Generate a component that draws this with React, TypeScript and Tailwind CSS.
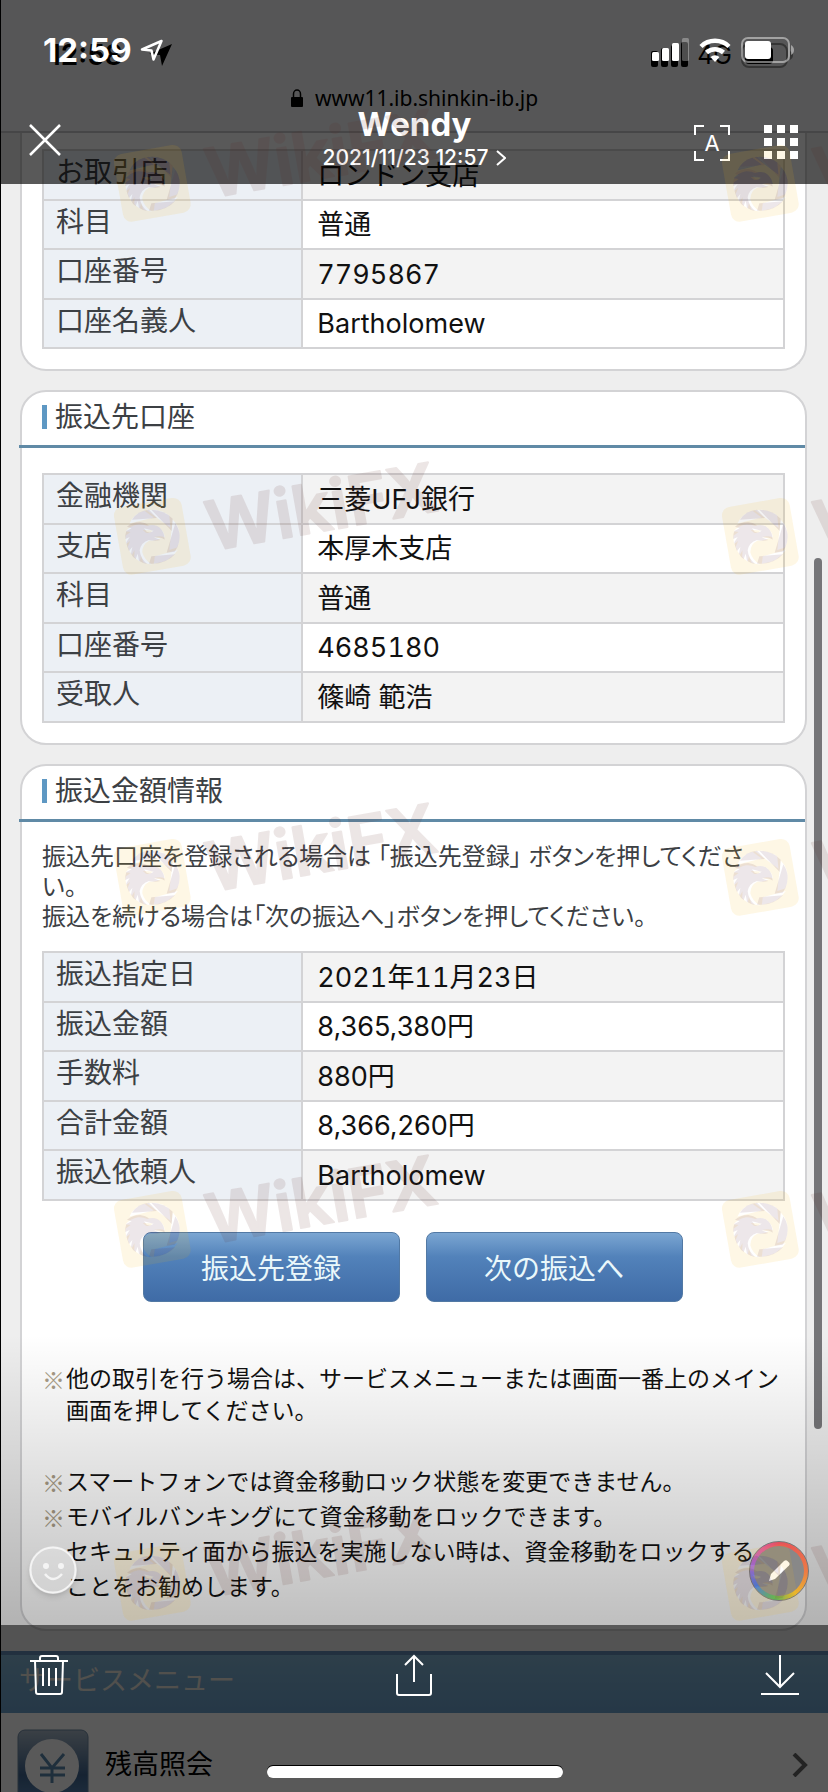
import { ReactNode } from 'react';

interface Row {
  label: string;
  value: string;
}

const source: Row[] = [
  { label: 'お取引店', value: 'ロンドン支店' },
  { label: '科目', value: '普通' },
  { label: '口座番号', value: '7795867' },
  { label: '口座名義人', value: 'Bartholomew' },
];

const destination: Row[] = [
  { label: '金融機関', value: '三菱UFJ銀行' },
  { label: '支店', value: '本厚木支店' },
  { label: '科目', value: '普通' },
  { label: '口座番号', value: '4685180' },
  { label: '受取人', value: '篠崎 範浩' },
];

const amounts: Row[] = [
  { label: '振込指定日', value: '2021年11月23日' },
  { label: '振込金額', value: '8,365,380円' },
  { label: '手数料', value: '880円' },
  { label: '合計金額', value: '8,366,260円' },
  { label: '振込依頼人', value: 'Bartholomew' },
];

const watermarkRows = ['top-[97px]', 'top-[450px]', 'top-[791px]', 'top-[1143px]', 'top-[1496px]'];

function DetailTable({ rows }: { rows: Row[] }) {
  return (
    <table className="w-full table-fixed border-separate border-spacing-0 border-l-2 border-t-2 border-[#d3d3d5]">
      <tbody>
        {rows.map((row) => (
          <tr key={row.label} className="h-[49px] odd:h-[50px] odd:bg-[#f3f3f3]">
            <th
              scope="row"
              className="w-[35%] border-b-2 border-r-2 border-[#d3d3d5] bg-[#ecf0f5] pl-3 text-left align-top text-[28px] leading-[42px] font-normal text-[#3c4044]">
              {row.label}
            </th>
            <td
              className={`border-b-2 border-r-2 border-[#d3d3d5] pt-px pl-[14px] align-middle text-[27px] leading-[42px] text-[#111] ${row.value.endsWith('円') ? '' : 'tabular-nums'}`}>
              {row.value}
            </td>
          </tr>
        ))}
      </tbody>
    </table>
  );
}

function Card({ title, children }: { title: string; children: ReactNode }) {
  return (
    <section className="rounded-[26px] border-2 border-[#d3d3d5] bg-white">
      <h2 className="-ml-[3px] flex h-[56px] items-center gap-2 border-b-[3px] border-[#608aa6] pb-1 pl-[23px] text-[28px] leading-[40px] text-[#3c4044]">
        <span className="h-6 w-[5px] bg-[#5e98c3]" />
        {title}
      </h2>
      <div className="px-5">{children}</div>
    </section>
  );
}

function BlueButton({ children }: { children: ReactNode }) {
  return (
    <button
      type="button"
      className="h-[70px] w-[257px] rounded-lg border border-[#5279a4] bg-linear-to-b from-[#7ba6d2] via-[#5282ba] via-35% to-[#3f6ba6] pt-1 text-[28px] leading-[40px] text-[#eaf8fb]">
      {children}
    </button>
  );
}

function Note({ mark, children }: { mark?: boolean; children: ReactNode }) {
  return (
    <li className="flex">
      <span className="w-6 shrink-0 font-['Noto_Sans_CJK_JP',sans-serif] text-[#a89c86]">{mark && '※'}</span>
      <span>{children}</span>
    </li>
  );
}

function BrowserBar() {
  return (
    <div className="flex h-[133px] flex-col border-b-2 border-[#c9c9cc] bg-[#f7f7f9] text-black">
      <div className="flex h-[80px] items-end justify-between pb-2 pl-[48px] pr-[34px]">
        <div className="flex items-center gap-6 text-[28px] leading-[34px] font-semibold">
          12:58
          <svg className="h-[24px] w-[26px]" viewBox="0 0 26 24" fill="currentColor">
            <path d="M25 1 2 11 13 12 15 23Z" />
          </svg>
        </div>
        <div className="flex items-center gap-2 text-[25px] leading-[34px]">
          <svg className="h-[26px] w-[38px]" viewBox="0 0 38 26" fill="currentColor">
            <rect x="0" y="9" width="7" height="16" rx="2" />
            <rect x="10" y="6" width="7" height="19" rx="2" />
            <rect x="20" y="3" width="7" height="22" rx="2" />
            <rect x="30" y="0" width="7" height="25" rx="2" />
          </svg>
          4G
          <svg className="h-[27px] w-[54px]" viewBox="0 0 54 27">
            <rect x="2" y="2" width="45" height="23" rx="7" fill="none" stroke="#999" strokeWidth="2" />
            <rect x="5" y="5" width="28" height="17" rx="4" />
            <path d="M50 9c4 2 4 7 0 9Z" fill="#999" />
          </svg>
        </div>
      </div>
      <div className="flex items-center justify-center gap-3 font-['Noto_Sans'] text-[21px] leading-[36px]">
        <svg className="h-[18px] w-3" viewBox="0 0 12 18">
          <rect x="0" y="8" width="12" height="10" rx="1" />
          <path d="M2.5 8V5a3.5 4 0 0 1 7 0v3" fill="none" stroke="#000" strokeWidth="1.5" />
        </svg>
        www11.ib.shinkin-ib.jp
      </div>
    </div>
  );
}

function ServiceMenu() {
  return (
    <nav className="mt-5">
      <h2 className="flex h-[62px] items-center border-t-4 border-[#628ab4] bg-linear-to-b from-[#82b4d3] to-[#6ca0cb] pb-[6px] pl-[18px] text-[27px] leading-[40px] text-[#e8e4dc]">
        サービスメニュー
      </h2>
      <a href="#balance" className="flex h-20 items-center bg-white pt-6 pl-4 pr-5 text-[27px] leading-[40px] text-black">
        <svg className="h-[80px] w-[72px] translate-y-1" viewBox="0 0 72 80">
          <defs>
            <linearGradient id="yen" x1="0" y1="0" x2="0" y2="1">
              <stop offset="0" stopColor="#a9b9c8" />
              <stop offset=".5" stopColor="#3f6590" />
              <stop offset="1" stopColor="#6f9dd0" />
            </linearGradient>
          </defs>
          <rect x="1" y="1" width="70" height="90" rx="7" fill="url(#yen)" stroke="#6f8aa5" />
          <circle cx="35" cy="37" r="27" fill="#fff" />
          <path d="M24 25 35 39 47 25M35 39V54M23 39H48M23 46H48" fill="none" stroke="#5b88ac" strokeWidth="3" />
        </svg>
        <span className="grow pl-4">残高照会</span>
        <svg className="h-6 w-4" viewBox="0 0 16 24" fill="none" stroke="#666" strokeWidth="4">
          <path d="m2 1 11 11L2 23" />
        </svg>
      </a>
    </nav>
  );
}

function ViewerHeader() {
  return (
    <header className="absolute inset-x-0 top-0 h-[184px] bg-black/65 text-white">
      <div className="flex h-[98px] items-center justify-between pt-[2px] pl-[42px] pr-[33px]">
        <div className="flex items-center gap-2 text-[33px] leading-[40px] font-bold">
          12:59
          <svg className="h-6 w-6" viewBox="0 0 24 24" fill="none" stroke="currentColor" strokeWidth="2.5">
            <path d="M21.500 3 2 11.500 11.500 12.500 13.500 21.500Z" strokeLinejoin="round" />
          </svg>
        </div>
        <div className="flex items-center gap-[10px]">
          <svg className="h-[26px] w-[37px]" viewBox="0 0 37 26" fill="currentColor">
            <rect x="0" y="15" width="7" height="9" rx="1.500" />
            <rect x="10" y="11" width="7" height="13" rx="1.500" />
            <rect x="20" y="6" width="7" height="18" rx="1.500" />
            <rect x="30" y="1" width="7" height="23" rx="1.500" opacity=".3" />
          </svg>
          <svg className="h-6 w-8" viewBox="0 0 32 24" fill="none" stroke="currentColor" strokeWidth="4.500">
            <path d="M2 8.500a20 20 0 0 1 28 0M7.500 14.500a12.500 12.500 0 0 1 17 0" />
            <path d="M16 24l-4.500-5a7 7 0 0 1 9 0Z" fill="currentColor" stroke="none" />
          </svg>
          <svg className="h-[26px] w-[54px]" viewBox="0 0 54 26">
            <rect x="1" y="1" width="47" height="24" rx="6" fill="none" stroke="#fff" strokeWidth="2" opacity=".45" />
            <rect x="4" y="4" width="26" height="18" rx="3" fill="#fff" />
            <path d="M50 8c4 2 4 8 0 10Z" fill="#fff" opacity=".45" />
          </svg>
        </div>
      </div>
      <div className="grid h-[86px] grid-cols-[1fr_auto_1fr] items-start px-7">
        <button type="button" aria-label="Close" className="mt-[26px] w-8">
          <svg className="h-8 w-8" viewBox="0 0 32 32" stroke="currentColor" strokeWidth="2.500">
            <path d="M1 1 31 31M31 1 1 31" />
          </svg>
        </button>
        <div className="mt-[6px] flex flex-col items-center">
          <h1 className="text-[33px] leading-[40px] font-bold">Wendy</h1>
          <button type="button" className="flex items-center gap-2 text-[21px] leading-[27px] font-medium">
            2021/11/23 12:57
            <svg className="h-4 w-[10px]" viewBox="0 0 10 16" fill="none" stroke="currentColor" strokeWidth="2">
              <path d="m1 1 8 7-8 7" />
            </svg>
          </button>
        </div>
        <div className="mt-[27px] flex justify-end gap-[34px]">
          <button type="button" aria-label="Scan text" className="relative h-9 w-9 text-[22px] leading-[36px]">
            <svg className="absolute inset-0 h-9 w-9" viewBox="0 0 36 36" fill="none" stroke="currentColor" strokeWidth="2">
              <path d="M1 10V1H10M26 1H35V10M35 26V35H26M10 35H1V26" />
            </svg>
            A
          </button>
          <button type="button" aria-label="Album" className="mr-[2px] grid h-[34px] w-[34px] grid-cols-3 gap-[5px]">
            {Array.from({ length: 9 }, (_, i) => (
              <span key={i} className="h-2 w-2 bg-white" />
            ))}
          </button>
        </div>
      </div>
    </header>
  );
}

function ViewerFooter() {
  return (
    <footer className="absolute inset-x-0 bottom-0 h-[168px] bg-black/65 text-white">
      <div className="flex items-center justify-between px-[29px] pt-[29px]">
        <button type="button" aria-label="Delete">
          <svg className="h-[42px] w-[38px]" viewBox="0 0 38 42" fill="none" stroke="currentColor" strokeWidth="2">
            <path d="M0 7H38M10 7V4a2 2 0 0 1 2-2H26a2 2 0 0 1 2 2V7M5 7 6 38a2 2 0 0 0 2 2H30a2 2 0 0 0 2-2L33 7M13 14V32M19 14V32M26 14V32" />
          </svg>
        </button>
        <button type="button" aria-label="Share">
          <svg className="h-[42px] w-[38px]" viewBox="0 0 38 42" fill="none" stroke="currentColor" strokeWidth="2">
            <path d="M1 20V39a2 2 0 0 0 2 2H33a2 2 0 0 0 2-2V20M18 28V3M9 11 18 2 27 11" />
          </svg>
        </button>
        <button type="button" aria-label="Download">
          <svg className="h-[42px] w-[38px]" viewBox="0 0 38 42" fill="none" stroke="currentColor" strokeWidth="2">
            <path d="M19 1V33M5 19 19 33 33 19M0 40H38" />
          </svg>
        </button>
      </div>
      <div className="absolute bottom-4 left-1/2 h-3 w-[296px] -translate-x-1/2 rounded-full bg-black">
        <div className="h-3 translate-y-px rounded-full bg-white" />
      </div>
    </footer>
  );
}

// Eagle head inside a camera aperture, cut out of the yellow tile
function EagleShape({ fill }: { fill: string }) {
  return (
    <g transform="translate(-203 -337)" fill={fill} fillRule="evenodd">
      <path d="M299 546Q318 518 350 516L374 541Z" />
      <path d="M357 516Q396 517 421 543L418 580Z" />
      <path d="M429 557Q447 584 440 614Q437 630 427 642L403 645Z" />
      <path d="M428 650Q398 682 350 678L357 656Z" />
      <path d="M284 567Q300 553 324 553Q340 555 350 563Q372 558 386 574Q396 586 397 606Q386 598 364 599L384 607Q368 612 350 607Q326 614 322 638Q324 662 344 679Q330 676 320 669L316 648L310 664Q300 657 296 648L300 628L290 640Q283 626 282 614L292 598L279 604Q278 590 282 580L298 572ZM335 572L364 579Q354 588 343 582Z" />
    </g>
  );
}

function Watermark() {
  return (
    <svg className="h-[150px] w-[360px] shrink-0 overflow-visible" viewBox="0 0 1080 450">
      <mask id="tile">
        <rect x="0" y="100" width="320" height="320" fill="#fff" />
        <EagleShape fill="#000" />
      </mask>
      <rect x="54" y="156" width="206" height="206" rx="26" transform="rotate(-10 157 259)" fill="rgba(245,185,20,.11)" mask="url(#tile)" />
      <EagleShape fill="rgba(90,35,60,.11)" />
      <g opacity=".11" fill="#5a231e" stroke="#5a231e" strokeWidth="6" strokeLinejoin="round">
        <text x="332" y="303" transform="rotate(-10 332 303)" fontFamily="Inter" fontWeight="600" fontSize="204">
          WikiFX
        </text>
      </g>
    </svg>
  );
}

export default function App() {
  return (
    <div className="relative min-h-screen overflow-hidden border-l border-black bg-[#eee] font-['Inter','Noto_Sans_CJK_JP',sans-serif]">
      <BrowserBar />
      <main className="flex flex-col gap-[19px] pl-[19px] pr-[21px]">
        <section className="rounded-b-[26px] border-x-2 border-b-2 border-[#d3d3d5] bg-white px-5 pt-4 pb-5">
          <DetailTable rows={source} />
        </section>
        <Card title="振込先口座">
          <div className="pt-[25px] pb-5">
            <DetailTable rows={destination} />
          </div>
        </Card>
        <Card title="振込金額情報">
          <p className="pt-5 pr-5 pb-[19px] text-[24px] leading-[30px] text-[#3c4044] [font-feature-settings:'palt']">
            振込先口座を登録される場合は 「振込先登録」 ボタンを押してください。
            <br />
            振込を続ける場合は「次の振込へ」ボタンを押してください。
          </p>
          <DetailTable rows={amounts} />
          <div className="mt-[31px] flex justify-center gap-[26px] pr-[2px]">
            <BlueButton>振込先登録</BlueButton>
            <BlueButton>次の振込へ</BlueButton>
          </div>
          <ul className="mt-[61px] text-[23px] leading-[32px] text-[#111]">
            <Note mark>他の取引を行う場合は、サービスメニューまたは画面一番上のメイン画面を押してください。</Note>
          </ul>
          <ul className="mt-[38px] pr-4 pb-[24px] text-[23px] leading-[35px] text-[#111]">
            <Note mark>スマートフォンでは資金移動ロック状態を変更できません。</Note>
            <Note mark>モバイルバンキングにて資金移動をロックできます。</Note>
            <Note>セキュリティ面から振込を実施しない時は、資金移動をロックすることをお勧めします。</Note>
          </ul>
        </Card>
      </main>
      <ServiceMenu />

      <div className="absolute top-[558px] right-[6px] h-[871px] w-2 rounded-full bg-[#757578]" />
      <div className="absolute inset-x-0 bottom-[168px] h-[290px] bg-linear-to-b from-black/0 to-black/25" />
      <ViewerHeader />
      <button type="button" aria-label="Reactions" className="absolute bottom-[199px] left-7 rounded-full bg-white/20 shadow-md">
        <svg className="h-12 w-12" viewBox="0 0 48 48" fill="none" stroke="#f4f4f4" strokeWidth="2">
          <circle cx="24" cy="24" r="22.500" />
          <circle cx="17" cy="20" r="3" fill="#f4f4f4" stroke="none" />
          <circle cx="32" cy="20" r="3" fill="#f4f4f4" stroke="none" />
          <path d="M16 28q8 10 17 0" strokeWidth="2.500" />
        </svg>
      </button>
      <button
        type="button"
        aria-label="Edit"
        className="absolute right-[19px] bottom-[192px] h-[60px] w-[60px] rounded-full border border-[#777] bg-[conic-gradient(#e8505b,#ec7a45_25%,#e9b62f_40%,#55b35a_53%,#4a7fd8_65%,#a86fd6_78%,#dd5a9a_90%,#e8505b)] p-1">
        <span className="flex h-full w-full items-center justify-center rounded-full bg-[#888]">
          <svg className="h-6 w-6" viewBox="0 0 24 24" fill="#fff">
            <path d="M2 22 4 15 17 2q2-1.500 3.500 0l1.500 1.500q1.500 1.500 0 3L8 20Z" />
          </svg>
        </span>
      </button>
      <ViewerFooter />
      <div className="pointer-events-none absolute inset-0 overflow-hidden" aria-hidden="true">
        {watermarkRows.map((top) => (
          <div key={top} className={`absolute left-[99px] flex gap-[248px] ${top}`}>
            <Watermark />
            <Watermark />
          </div>
        ))}
      </div>
    </div>
  );
}
